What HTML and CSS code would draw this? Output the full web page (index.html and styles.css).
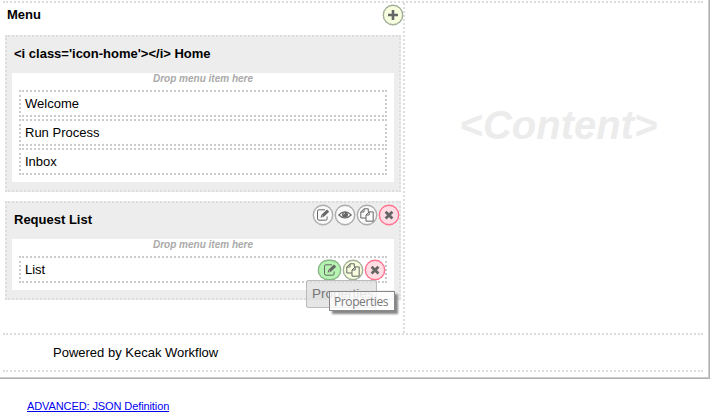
FILE: index.html
```
<!DOCTYPE html>
<html lang="en">
<head>
<meta charset="utf-8">
<title>Userview Builder</title>
<link rel="stylesheet" href="styles.css">
</head>
<body>
<svg class="defs" width="0" height="0">
  <symbol id="edit" viewBox="0 0 14 14"><path d="M9 1.8H3Q1.5 1.8 1.5 3.2V10.8Q1.5 12.2 3 12.2H9.7Q11.1 12.2 11.1 10.8V8.5" fill="none" stroke="currentColor"/><path d="M4.6 9.6L5.5 6.8L11 1.5L13.2 3.7L7.5 9Z" fill="currentColor"/><path d="M6 7.6L7.1 8.6" stroke="#fff" stroke-width=".8"/></symbol>
  <symbol id="eye" viewBox="0 0 14 14"><path d="M.8 7Q7 .6 13.2 7Q7 13 .8 7Z" fill="none" stroke="currentColor" stroke-width="1.1"/><circle cx="7" cy="6.7" r="3" fill="currentColor"/><path d="M5.6 6.5Q5.6 5.2 7 5.1" fill="none" stroke="#fff" stroke-width=".7"/></symbol>
  <symbol id="copy" viewBox="0 0 14 14"><path d="M6 10H.8V4L4 .8H8.3V4M4 .8V4H.8M6 13.2V7L9.2 3.9H13.2V13.2ZM9.2 3.9V7H6" fill="none" stroke="currentColor"/></symbol>
  <symbol id="cross" viewBox="0 0 14 14"><path d="M3.6 3.8L10.4 10.6M10.4 3.8L3.6 10.6" stroke="currentColor" stroke-width="2.8"/></symbol>
  <symbol id="plus" viewBox="0 0 14 14"><path d="M7 2V12M2 7H12" stroke="currentColor" stroke-width="2.6"/></symbol>
</svg>
<main class="builder">
  <div class="columns">
    <section class="menu">
      <header class="menu-head"><h2>Menu</h2><button class="btn add"><svg><use href="#plus"/></svg></button></header>
      <article class="category">
        <h3>&lt;i class='icon-home'&gt;&lt;/i&gt; Home</h3>
        <div class="items">
          <p class="hint">Drop menu item here</p>
          <div class="item">Welcome</div>
          <div class="item">Run Process</div>
          <div class="item">Inbox</div>
        </div>
      </article>
      <article class="category">
        <h3>Request List</h3>
        <div class="actions">
          <button class="btn"><svg><use href="#edit"/></svg></button>
          <button class="btn"><svg><use href="#eye"/></svg></button>
          <button class="btn"><svg><use href="#copy"/></svg></button>
          <button class="btn delete"><svg><use href="#cross"/></svg></button>
        </div>
        <div class="items">
          <p class="hint">Drop menu item here</p>
          <div class="item">List
            <div class="actions">
              <button class="btn active"><svg><use href="#edit"/></svg></button>
              <button class="btn add"><svg><use href="#copy"/></svg></button>
              <button class="btn delete"><svg><use href="#cross"/></svg></button>
            </div>
            <div class="label">Properties</div>
            <div class="tooltip">Properties</div>
          </div>
        </div>
      </article>
    </section>
    <section class="content">&lt;Content&gt;</section>
  </div>
  <footer class="footer">Powered by Kecak Workflow</footer>
</main>
<a class="advanced" href="#">ADVANCED: JSON Definition</a>
</body>
</html>
```
FILE: styles.css
```
* { box-sizing: border-box; }
body { margin: 0; background: #fff; color: #000; font: 13px/16px "Liberation Sans", Arial, sans-serif; height: 420px; overflow: hidden; }
h2, h3, p { margin: 0; }
.defs { display: block; height: 0; }
.builder { width: 710px; height: 379px; padding: 1px 6px 1px 3px; border: solid #b0b0b0; border-width: 0 1px 1px 0; box-shadow: inset -1px -1px #ccc; }
.columns { display: flex; width: 700px; height: 332px; border-top: 2px dotted #ddd; }
.menu { width: 402px; padding-left: 2px; border-right: 2px dotted #ddd; }
.menu-head { display: flex; justify-content: space-between; height: 32px; padding: 1px 0 0 2px; }
h2, h3 { font-size: 13px; line-height: 16px; font-weight: bold; }
h2 { margin-top: 3px; }
.category { position: relative; width: 396px; margin-bottom: 9px; padding: 9px 5px 8px; background: #ededed; border: 2px dotted #ddd; }
.category h3 { height: 27px; padding-left: 2px; }
.items { padding: 0 7px 7px; background: #fff; }
.hint { height: 17px; color: #aaa; font: italic bold 10px/12px "Liberation Sans", Arial, sans-serif; text-align: center; }
.item { position: relative; height: 27px; padding: 4px; line-height: 15px; border: 2px dotted #ccc; }
.item + .item { margin-top: 2px; }
.btn { width: 20px; height: 20px; padding: 0; display: grid; place-items: center; border: 1.5px solid #aaa; border-radius: 50%; background: #fafafa; color: #666; box-shadow: 0 0 0 .4px #aaa; }
.btn svg { width: 14px; height: 14px; }
.btn.add { background: #f8ffdf; border-color: #9fac98; box-shadow: 0 0 0 .4px #9fac98; }
.menu-head .btn { margin-top: 1px; }
.btn.delete { background: #ffdde4; border-color: #ff6f8c; box-shadow: 0 0 0 .4px #ff6f8c; }
.btn.active { width: 23px; border-radius: 10px; background: #b4f3b0; border-color: #8cb489; box-shadow: 0 0 0 .4px #8cb489; }
.actions { position: absolute; top: 2px; right: 0; display: flex; gap: 2px; }
.label { position: absolute; z-index: 1; left: 285px; top: 22px; width: 71px; height: 28px; padding: 5px; font-size: 13.5px; line-height: 16px; color: #777; background: rgba(222,222,222,.75); border: 1px solid #bbb; border-radius: 2px; }
.tooltip { position: absolute; z-index: 2; left: 308px; top: 33px; width: 66px; height: 20px; padding: 1px 4px; font: 12px/17px "Open Sans", sans-serif; letter-spacing: -.4px; color: #777; background: rgba(255,255,255,.8); border: 1px solid #888; box-shadow: 3px 3px 2px #888; }
.content { flex: 1; padding-top: 97px; padding-left: 9px; color: #ececec; font: italic bold 40px/50px "Liberation Sans", Arial, sans-serif; text-align: center; }
.footer { width: 700px; height: 39px; padding: 10px 0 0 50px; border: dotted #ddd; border-width: 2px 0; line-height: 16px; }
.advanced { display: inline-block; margin: 20px 0 0 27px; font-size: 11px; letter-spacing: -.1px; line-height: 14px; color: #00e; text-decoration: underline; }
```
